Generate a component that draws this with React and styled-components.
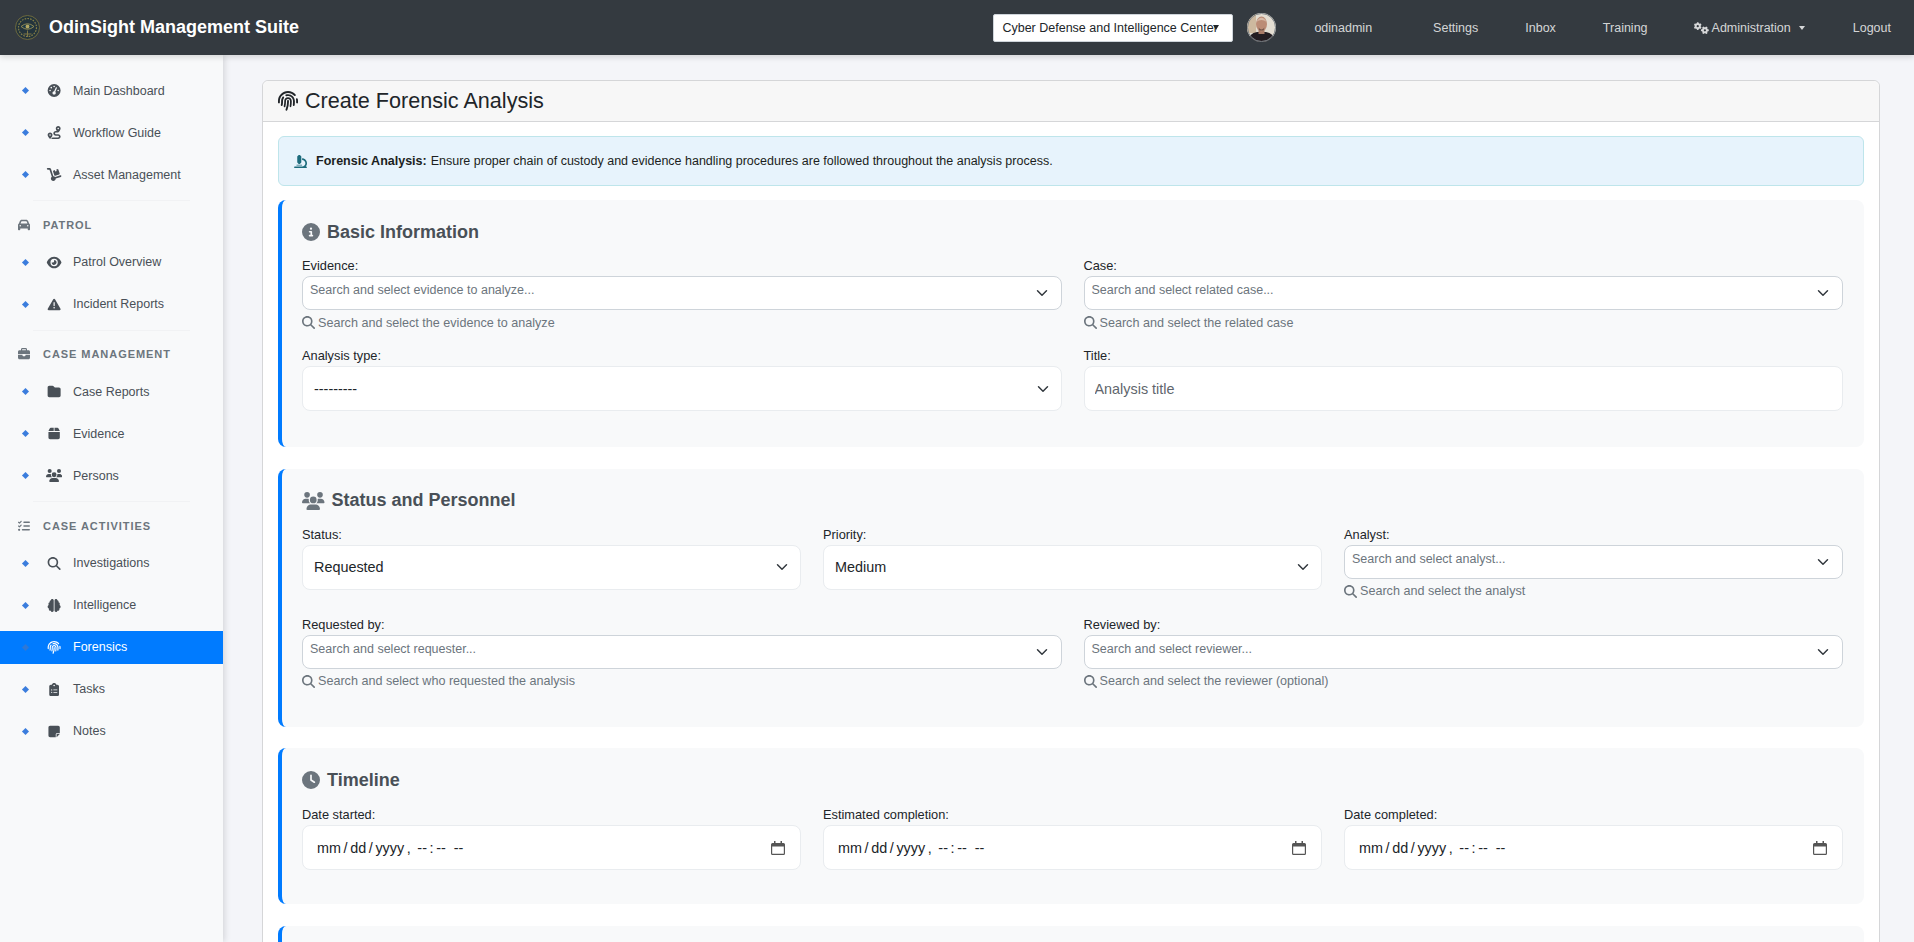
import React from "react";
import styled, { createGlobalStyle } from "styled-components";
import {
  FaBox,
  FaBrain,
  FaBriefcase,
  FaCar,
  FaCircleInfo,
  FaClipboardList,
  FaClock,
  FaDolly,
  FaEye,
  FaFingerprint,
  FaFolder,
  FaGaugeHigh,
  FaGears,
  FaListCheck,
  FaMagnifyingGlass,
  FaMicroscope,
  FaNoteSticky,
  FaRoute,
  FaTriangleExclamation,
  FaUsers,
} from "react-icons/fa6";

const chevron =
  "url(\"data:image/svg+xml,%3csvg xmlns='http://www.w3.org/2000/svg' viewBox='0 0 16 16'%3e%3cpath fill='none' stroke='%23343a40' stroke-linecap='round' stroke-linejoin='round' stroke-width='2' d='m2 5 6 6 6-6'/%3e%3c/svg%3e\")";

const orgCaret =
  "url(\"data:image/svg+xml,%3csvg xmlns='http://www.w3.org/2000/svg' viewBox='0 0 6 5'%3e%3cpath fill='%23212529' d='M0 0h6L3 5z'/%3e%3c/svg%3e\")";

const calendar =
  "url(\"data:image/svg+xml,%3csvg xmlns='http://www.w3.org/2000/svg' viewBox='0 0 14 14'%3e%3cpath fill='%23555' d='M3 0h1.5v2h5V0H11v2h1.5A1.5 1.5 0 0 1 14 3.500V12.500A1.500 1.500 0 0 1 12.500 14h-11A1.500 1.500 0 0 1 0 12.500V3.500A1.500 1.500 0 0 1 1.500 2H3zM1.200 5.500v7c0 .2.100.300.300.300h11c.2 0 .3-.1.3-.3v-7z'/%3e%3c/svg%3e\")";

const GlobalStyle = createGlobalStyle`
  html, body {
    margin: 0;
    height: 100%;
    overflow: hidden;
    background: #f4f5f9;
    font-family: "Liberation Sans", Arial, sans-serif;
    color: #212529;
  }
  * {
    box-sizing: border-box;
  }
`;

const Page = styled.div`
  height: 942px;
  display: flex;
  flex-direction: column;
  overflow: hidden;
`;

const Navbar = styled.header`
  height: 55px;
  flex: none;
  display: flex;
  align-items: center;
  background: #343a40;
  box-shadow: 0 2px 6px rgba(0, 0, 0, 0.15);
  padding-left: 15px;
  position: relative;
  z-index: 3;
`;

const Brand = styled.div`
  display: flex;
  align-items: center;
  gap: 9px;
  color: #fff;
  font-size: 18px;
  font-weight: 700;
  margin-right: auto;
`;

const OrgSelect = styled.select`
  width: 240px;
  height: 28px;
  appearance: none;
  border: 1px solid #ced4da;
  border-radius: 2px;
  background: #fff ${orgCaret} no-repeat right 13px center / 6px 5px;
  color: #212529;
  font-family: inherit;
  font-size: 12.5px;
  padding: 0 0 0 8px;
  margin-right: 14px;
`;

const Avatar = styled.svg`
  width: 29px;
  height: 29px;
  margin-right: 38px;
  flex: none;
`;

const NavLink = styled.a`
  color: rgba(255, 255, 255, 0.8);
  font-size: 12.5px;
  display: flex;
  align-items: center;
  gap: 3px;
  margin-right: ${(p) => p.$gap}px;
  white-space: nowrap;

  svg {
    width: 1.25em;
    font-size: 12px;
  }
`;

const Caret = styled.span`
  width: 0;
  height: 0;
  margin-left: 5px;
  border-top: 4px solid currentColor;
  border-left: 3px solid transparent;
  border-right: 3px solid transparent;
`;

const Body = styled.div`
  flex: 1;
  min-height: 0;
  display: flex;
`;

const Sidebar = styled.nav`
  width: 223px;
  flex: none;
  background: #f8f9fa;
  box-shadow: 2px 0 6px rgba(0, 0, 0, 0.12);
  padding-top: 19px;
  position: relative;
  z-index: 2;
`;

const NavItem = styled.div`
  height: 33px;
  margin-bottom: 9px;
  display: flex;
  align-items: center;
  font-size: 12.5px;
  color: ${(p) => (p.$active ? "#fff" : "#495057")};
  background: ${(p) => (p.$active ? "#007bff" : "transparent")};
`;

const Diamond = styled.span`
  width: 5px;
  height: 5px;
  margin-left: 23px;
  flex: none;
  background: ${(p) => (p.$active ? "#2f78d6" : "#3b7ddd")};
  transform: rotate(45deg);
`;

const ItemIcon = styled.span`
  width: 18px;
  margin-left: 17px;
  margin-right: 10px;
  flex: none;
  display: flex;
  justify-content: center;
  font-size: 13px;

  svg {
    width: 1.25em;
    flex: none;
  }
`;

const Divider = styled.div`
  height: 1px;
  margin: 1.5px 33px 0;
  background: #f1f2f4;
`;

const GroupTitle = styled.div`
  height: 18px;
  margin: 14.5px 0 12px 18px;
  display: flex;
  align-items: center;
  color: #6c757d;
  font-size: 11px;
  font-weight: 700;
  letter-spacing: 0.95px;
  text-transform: uppercase;

  svg {
    width: 12px;
    margin-right: 13px;
    font-size: 12px;
  }
`;

const Main = styled.main`
  flex: 1;
  min-width: 0;
  padding: 25px 34px 0 39px;
  overflow: hidden;
`;

const Card = styled.div`
  background: #fff;
  border: 1px solid #d5d6d8;
  border-radius: 6px;
`;

const CardHeader = styled.div`
  height: 41px;
  display: flex;
  align-items: center;
  gap: 7px;
  padding-left: 15px;
  background: #f7f7f7;
  border-bottom: 1px solid #d5d6d8;
  border-radius: 6px 6px 0 0;
  font-size: 21.6px;
  color: #212529;

  svg {
    font-size: 20px;
  }
`;

const CardBody = styled.div`
  padding: 14px 15px 0;
`;

const Alert = styled.div`
  height: 50px;
  display: flex;
  align-items: center;
  margin-bottom: 14px;
  padding-left: 15px;
  background: #e7f3fc;
  border: 1px solid #bee5eb;
  border-radius: 6px;
  font-size: 12.5px;
  color: #1b1e21;

  svg {
    margin-right: 9px;
    font-size: 13px;
    color: #1c6b7c;
  }

  b {
    margin-right: 4px;
  }
`;

const Section = styled.section`
  background: #f8f9fa;
  border-left: 4px solid #007bff;
  border-radius: 8px;
  padding: 20px 21px 0 20px;
  margin-bottom: 21.5px;
  height: ${(p) => p.$height}px;
`;

const SectionTitle = styled.h3`
  margin: 0;
  height: 24px;
  display: flex;
  align-items: center;
  gap: 7px;
  font-size: 18px;
  font-weight: 700;
  color: #495057;

  svg {
    flex: none;
    width: ${(p) => (p.$wide ? "1.25em" : "1em")};
    color: #6c757d;
    font-size: 18px;
  }
`;

const FieldRow = styled.div`
  display: grid;
  grid-template-columns: repeat(${(p) => p.$cols}, 1fr);
  column-gap: 22px;
  margin-top: ${(p) => p.$top}px;
  height: ${(p) => p.$height}px;
`;

const Label = styled.label`
  display: block;
  height: 15px;
  line-height: 15px;
  margin-bottom: 3px;
  font-size: 12.8px;
  color: #212529;
`;

const SearchBox = styled.div`
  height: 34px;
  padding: 6px 7px;
  background: #fff ${chevron} no-repeat right 13px center / 12px 12px;
  border: 1px solid #ced4da;
  border-radius: 8px;
  font-size: 12.5px;
  color: #6c757d;
`;

const Help = styled.div`
  margin-top: 5.5px;
  display: flex;
  align-items: center;
  gap: 3px;
  font-size: 12.6px;
  color: #6c757d;

  svg {
    font-size: 13px;
  }
`;

const Select = styled.select`
  display: block;
  width: 100%;
  height: 45px;
  appearance: none;
  padding: 0 11px;
  background: #fff ${chevron} no-repeat right 12px center / 12px 12px;
  border: 1px solid #e9ecef;
  border-radius: 8px;
  font-family: inherit;
  font-size: 14.4px;
  color: #212529;
`;

const TextInput = styled.input`
  display: block;
  width: 100%;
  height: 45px;
  padding: 0 10px;
  background: #fff;
  border: 1px solid #e9ecef;
  border-radius: 8px;
  font-family: inherit;
  font-size: 14.4px;
  color: #212529;

  &::placeholder {
    color: #5f666d;
    opacity: 1;
  }

  &[type="datetime-local"] {
    padding: 0 15px 0 13px;
  }

  &::-webkit-datetime-edit-text {
    padding: 0 1.6px;
  }

  &::-webkit-calendar-picker-indicator {
    width: 14px;
    height: 14px;
    padding: 0;
    background: ${calendar} no-repeat center / 14px 14px;
  }
`;

const menu = [
  { items: [["Main Dashboard", FaGaugeHigh], ["Workflow Guide", FaRoute], ["Asset Management", FaDolly]] },
  { title: "Patrol", icon: FaCar, items: [["Patrol Overview", FaEye], ["Incident Reports", FaTriangleExclamation]] },
  { title: "Case Management", icon: FaBriefcase, items: [["Case Reports", FaFolder], ["Evidence", FaBox], ["Persons", FaUsers]] },
  {
    title: "Case Activities",
    icon: FaListCheck,
    items: [
      ["Investigations", FaMagnifyingGlass],
      ["Intelligence", FaBrain],
      ["Forensics", FaFingerprint],
      ["Tasks", FaClipboardList],
      ["Notes", FaNoteSticky],
    ],
  },
];

function Logo() {
  return (
    <svg width="25" height="25" viewBox="0 0 25 25">
      <circle cx="12.5" cy="12.5" r="12" fill="#24343c" stroke="#6e6a3e" strokeWidth="1" />
      <circle cx="12.5" cy="12.5" r="9" fill="none" stroke="#8a8248" strokeWidth="1.2" strokeDasharray="1.6 1.2" />
      <path d="M6 11.500 Q12.500 6 19 11.500 Q12.500 17 6 11.500Z" fill="#1d3a48" stroke="#9a9052" strokeWidth="0.9" />
      <circle cx="12.5" cy="11.5" r="1.9" fill="#b3a864" />
      <path d="M8.500 19 L16.500 19 M12.500 15.500 L12.500 22" stroke="#7e7745" strokeWidth="1" />
    </svg>
  );
}

function Photo() {
  return (
    <Avatar viewBox="0 0 29 29">
      <defs>
        <clipPath id="avatar-clip">
          <circle cx="14.5" cy="14.5" r="14.5" />
        </clipPath>
      </defs>
      <g clipPath="url(#avatar-clip)">
        <rect width="29" height="29" fill="#e3ddd2" />
        <rect width="9" height="20" fill="#cdb99f" />
        <path d="M1 29 Q2 20 10 19 L19 19 Q27 20 28 29Z" fill="#241d22" />
        <rect x="11.500" y="15" width="6" height="6" fill="#a87a66" />
        <ellipse cx="14.5" cy="11" rx="5.500" ry="7.500" fill="#bb8c76" />
        <path d="M9.200 9 Q14.500 0.500 19.800 9 Q14.500 5 9.200 9Z" fill="#d7b9a6" />
        <path d="M11.500 14.500 Q14.500 18.500 17.500 14.500 L16.500 17.500 L12.500 17.500Z" fill="#6d5148" />
      </g>
      <circle cx="14.5" cy="14.5" r="14" fill="none" stroke="#7b8288" />
    </Avatar>
  );
}

function SearchField({ label, placeholder, help }) {
  return (
    <div>
      <Label>{label}</Label>
      <SearchBox>{placeholder}</SearchBox>
      <Help>
        <FaMagnifyingGlass />
        {help}
      </Help>
    </div>
  );
}

function SelectField({ label, value }) {
  return (
    <div>
      <Label>{label}</Label>
      <Select defaultValue={value}>
        <option>{value}</option>
      </Select>
    </div>
  );
}

function DateField({ label }) {
  return (
    <div>
      <Label>{label}</Label>
      <TextInput type="datetime-local" />
    </div>
  );
}

export default function App() {
  return (
    <Page>
      <GlobalStyle />
      <Navbar>
        <Brand>
          <Logo />
          OdinSight Management Suite
        </Brand>
        <OrgSelect defaultValue="Cyber Defense and Intelligence Center">
          <option>Cyber Defense and Intelligence Center</option>
        </OrgSelect>
        <Photo />
        <NavLink $gap={61}>odinadmin</NavLink>
        <NavLink $gap={47}>Settings</NavLink>
        <NavLink $gap={47}>Inbox</NavLink>
        <NavLink $gap={46}>Training</NavLink>
        <NavLink $gap={48}>
          <FaGears />
          Administration
          <Caret />
        </NavLink>
        <NavLink $gap={23}>Logout</NavLink>
      </Navbar>
      <Body>
        <Sidebar>
          {menu.map((group, i) => {
            const GroupIcon = group.icon;
            return (
              <div key={i}>
                {group.title && (
                  <GroupTitle>
                    <GroupIcon />
                    {group.title}
                  </GroupTitle>
                )}
                {group.items.map(([name, Icon]) => (
                  <NavItem key={name} $active={name === "Forensics"}>
                    <Diamond $active={name === "Forensics"} />
                    <ItemIcon>
                      <Icon />
                    </ItemIcon>
                    {name}
                  </NavItem>
                ))}
                {i < menu.length - 1 && <Divider />}
              </div>
            );
          })}
        </Sidebar>
        <Main>
          <Card>
            <CardHeader>
              <FaFingerprint />
              Create Forensic Analysis
            </CardHeader>
            <CardBody>
              <Alert>
                <FaMicroscope />
                <b>Forensic Analysis:</b>
                Ensure proper chain of custody and evidence handling procedures are followed throughout the analysis process.
              </Alert>

              <Section $height={247}>
                <SectionTitle>
                  <FaCircleInfo />
                  Basic Information
                </SectionTitle>
                <FieldRow $cols={2} $top={14} $height={90}>
                  <SearchField
                    label="Evidence:"
                    placeholder="Search and select evidence to analyze..."
                    help="Search and select the evidence to analyze"
                  />
                  <SearchField
                    label="Case:"
                    placeholder="Search and select related case..."
                    help="Search and select the related case"
                  />
                </FieldRow>
                <FieldRow $cols={2} $top={0} $height={63}>
                  <SelectField label="Analysis type:" value="---------" />
                  <div>
                    <Label>Title:</Label>
                    <TextInput placeholder="Analysis title" />
                  </div>
                </FieldRow>
              </Section>

              <Section $height={258}>
                <SectionTitle $wide>
                  <FaUsers />
                  Status and Personnel
                </SectionTitle>
                <FieldRow $cols={3} $top={14} $height={90}>
                  <SelectField label="Status:" value="Requested" />
                  <SelectField label="Priority:" value="Medium" />
                  <SearchField
                    label="Analyst:"
                    placeholder="Search and select analyst..."
                    help="Search and select the analyst"
                  />
                </FieldRow>
                <FieldRow $cols={2} $top={0} $height={70}>
                  <SearchField
                    label="Requested by:"
                    placeholder="Search and select requester..."
                    help="Search and select who requested the analysis"
                  />
                  <SearchField
                    label="Reviewed by:"
                    placeholder="Search and select reviewer..."
                    help="Search and select the reviewer (optional)"
                  />
                </FieldRow>
              </Section>

              <Section $height={156}>
                <SectionTitle>
                  <FaClock />
                  Timeline
                </SectionTitle>
                <FieldRow $cols={3} $top={15} $height={63}>
                  <DateField label="Date started:" />
                  <DateField label="Estimated completion:" />
                  <DateField label="Date completed:" />
                </FieldRow>
              </Section>

              <Section $height={156} />
            </CardBody>
          </Card>
        </Main>
      </Body>
    </Page>
  );
}
